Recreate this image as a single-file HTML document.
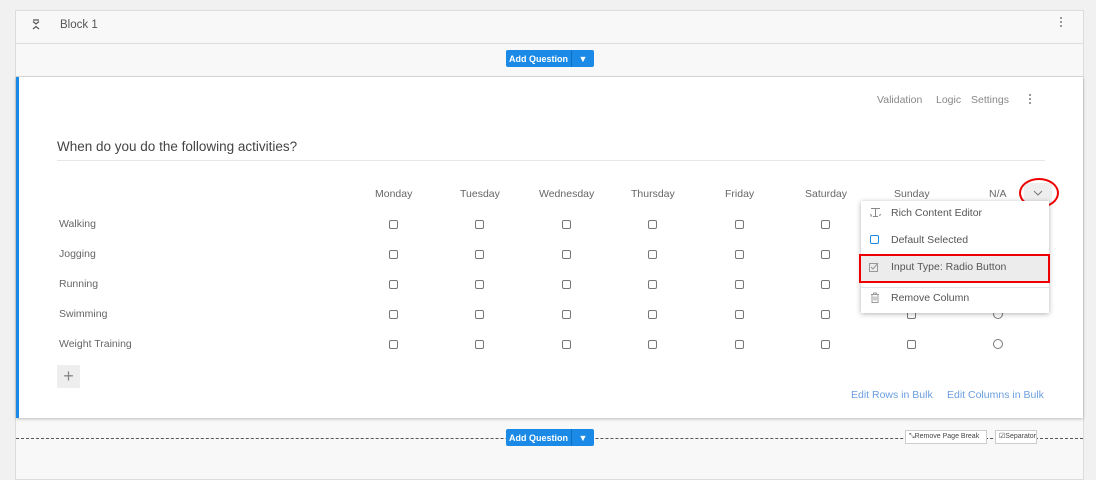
<!DOCTYPE html>
<html><head><style>
*{box-sizing:border-box;margin:0;padding:0}
body{width:1096px;height:464px;background:#f1f1f1;font-family:"Liberation Sans",sans-serif;position:relative;overflow:hidden;color:#555}
.a{position:absolute}
.btn{position:absolute;height:17px;background:#1a8ae6;color:#fff;font-size:9px;font-weight:bold;border-radius:2px;display:flex;align-items:center;white-space:nowrap}
.btn .l{width:66px;justify-content:center;border-right:1px solid #0f6fbf;height:100%;display:flex;align-items:center}
.btn .r{width:22px;display:flex;justify-content:center;font-size:9px}
.cb{position:absolute;width:9px;height:9px;border:1px solid #777;border-radius:2px}
.rd{position:absolute;width:10px;height:10px;border:1px solid #777;border-radius:50%}
.t{position:absolute;font-size:10.5px;color:#666;white-space:nowrap}
</style></head><body>
<div class="a" style="left:15px;top:10px;width:1069px;height:470px;background:#f8f8f8;border:1px solid #dcdcdc"></div>
<div class="a" style="left:16px;top:43px;width:1067px;height:1px;background:#ddd"></div>
<svg class="a" style="left:31px;top:19px" width="10" height="12" viewBox="0 0 10 12"><path d="M2 1h6M2 2.5l3 2.5 3-2.5M2 10l3-2.5 3 2.5M2 11.5" stroke="#555" stroke-width="1.2" fill="none"/></svg>
<div class="t" style="left:60px;top:19px;font-size:11.5px;color:#555">Block 1</div>
<div class="a" style="left:1060px;top:17px;width:2px;height:2px;background:#999;box-shadow:0 4px #999,0 8px #999"></div>
<div class="btn" style="left:506px;top:50px;width:88px"><span class="l">Add Question</span><span class="r">▼</span></div>
<div class="a" style="left:16px;top:76px;width:1067px;height:1px;background:#ddd"></div>
<div class="a" style="left:16px;top:77px;width:1067px;height:341px;background:#fff;border-left:3px solid #1a8ae6;box-shadow:0 1px 3px rgba(0,0,0,.25)"></div>
<div class="t" style="left:877px;top:94px;color:#888">Validation</div>
<div class="t" style="left:936px;top:94px;color:#888">Logic</div>
<div class="t" style="left:971px;top:94px;color:#888">Settings</div>
<div class="a" style="left:1029px;top:94px;width:2px;height:2px;background:#999;box-shadow:0 4px #999,0 8px #999"></div>
<div class="t" style="left:57px;top:139px;font-size:13.5px;color:#444">When do you do the following activities?</div>
<div class="a" style="left:57px;top:160px;width:988px;height:1px;background:#e6e6e6"></div>
<div class="t" style="left:375px;top:188px">Monday</div>
<div class="t" style="left:460px;top:188px">Tuesday</div>
<div class="t" style="left:539px;top:188px">Wednesday</div>
<div class="t" style="left:631px;top:188px">Thursday</div>
<div class="t" style="left:725px;top:188px">Friday</div>
<div class="t" style="left:805px;top:188px">Saturday</div>
<div class="t" style="left:894px;top:188px">Sunday</div>
<div class="t" style="left:989px;top:188px">N/A</div>
<div class="a" style="left:1024px;top:183px;width:28px;height:21px;background:#eee"></div>
<svg class="a" style="left:1033px;top:190px" width="10" height="6"><path d="M1 1l4 4 4-4" stroke="#777" fill="none"/></svg>
<div class="a" style="left:1019px;top:178px;width:40px;height:30px;border:2px solid #e00;border-radius:50%"></div>
<div class="t" style="left:59px;top:218px">Walking</div>
<div class="t" style="left:59px;top:248px">Jogging</div>
<div class="t" style="left:59px;top:278px">Running</div>
<div class="t" style="left:59px;top:308px">Swimming</div>
<div class="t" style="left:59px;top:338px">Weight Training</div>
<div id="g"></div>
<div class="a" style="left:57px;top:365px;width:23px;height:23px;background:#eee;color:#888;font-size:18px;text-align:center;line-height:22px">+</div>
<div class="t" style="left:851px;top:389px;color:#6a9ee0">Edit Rows in Bulk</div>
<div class="t" style="left:947px;top:389px;color:#6a9ee0">Edit Columns in Bulk</div>
<div class="a" style="left:861px;top:201px;width:188px;height:112px;background:#fff;box-shadow:0 1px 5px rgba(0,0,0,.3)"></div>
<div class="a" style="left:861px;top:254px;width:188px;height:28px;background:#ececec"></div>
<div class="a" style="left:861px;top:287px;width:188px;height:1px;background:#e3e3e3"></div>
<svg class="a" style="left:870px;top:207px" width="11" height="11"><path d="M1 1.5h9M5.5 1.5v8M3 9.5h5M0.5 7l1 2-1 0M10.5 7l-1 2" stroke="#888" fill="none"/></svg>
<div class="t" style="left:891px;top:207px;color:#555">Rich Content Editor</div>
<div class="cb" style="left:870px;top:235px;border-color:#1a8ae6"></div>
<div class="t" style="left:891px;top:234px;color:#555">Default Selected</div>
<svg class="a" style="left:869px;top:262px" width="11" height="10"><rect x="0.5" y="1.5" width="8" height="8" fill="none" stroke="#999"/><path d="M2 5l2 2 5-6" stroke="#999" fill="none"/></svg>
<div class="t" style="left:891px;top:261px;color:#555">Input Type: Radio Button</div>
<svg class="a" style="left:870px;top:292px" width="10" height="11"><path d="M1 2.5h8M3.5 2.5v-1.5h3v1.5M2 2.5v8h6v-8M4 4.5v4M6 4.5v4" stroke="#999" fill="none"/></svg>
<div class="t" style="left:891px;top:292px;color:#555">Remove Column</div>
<div class="a" style="left:859px;top:254px;width:191px;height:29px;border:2px solid #e00"></div>
<div class="a" style="left:16px;top:438px;width:1067px;border-top:1px dashed #555"></div>
<div class="btn" style="left:506px;top:429px;width:88px"><span class="l">Add Question</span><span class="r">▼</span></div>
<div class="a" style="left:905px;top:430px;width:82px;height:14px;background:#fff;border:1px solid #ccc;font-size:7px;color:#444;line-height:12px;padding-left:3px;white-space:nowrap">⤡Remove Page Break</div>
<div class="a" style="left:995px;top:430px;width:42px;height:14px;background:#fff;border:1px solid #ccc;font-size:7px;color:#444;line-height:12px;padding-left:3px;white-space:nowrap">☑Separator</div>
<script>
var xs=[393,479,566,652,739,825,911,998],ys=[224,254,284,314,344],h='';
ys.forEach(function(y,i){xs.forEach(function(x,j){
 if(x>=860&&i<3)return;
 if(j==7&&i>=3){h+='<div class="rd" style="left:'+(x-5)+'px;top:'+(y-5)+'px"></div>'}
 else if(j==7)return;
 else h+='<div class="cb" style="left:'+(x-4)+'px;top:'+(y-4)+'px"></div>';
});});
document.getElementById('g').outerHTML=h;
</script>
</body></html>
